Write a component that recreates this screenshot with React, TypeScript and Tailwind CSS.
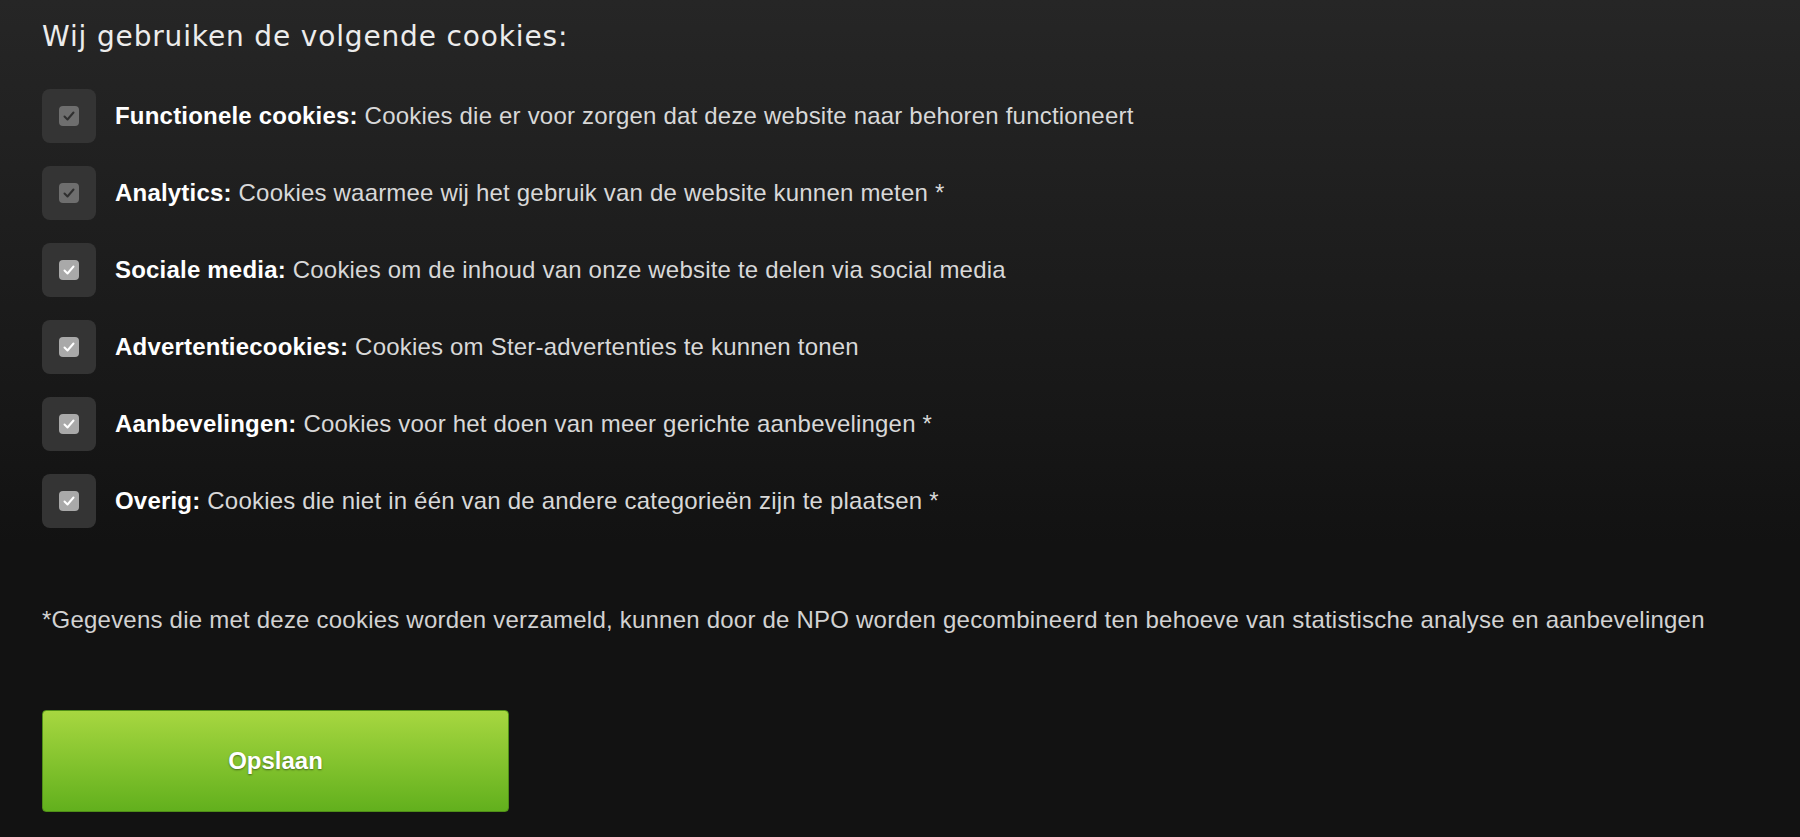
import { useState } from "react";

interface CookieOption {
  id: string;
  label: string;
  description: string;
  locked?: boolean;
}

const OPTIONS: CookieOption[] = [
  { id: "functional", label: "Functionele cookies:", description: "Cookies die er voor zorgen dat deze website naar behoren functioneert", locked: true },
  { id: "analytics", label: "Analytics:", description: "Cookies waarmee wij het gebruik van de website kunnen meten *", locked: true },
  { id: "social", label: "Sociale media:", description: "Cookies om de inhoud van onze website te delen via social media" },
  { id: "ads", label: "Advertentiecookies:", description: "Cookies om Ster-advertenties te kunnen tonen" },
  { id: "recommendations", label: "Aanbevelingen:", description: "Cookies voor het doen van meer gerichte aanbevelingen *" },
  { id: "other", label: "Overig:", description: "Cookies die niet in één van de andere categorieën zijn te plaatsen *" },
];

function CheckBox({ checked, locked, onToggle }: { checked: boolean; locked?: boolean; onToggle: () => void }) {
  return (
    <button
      type="button"
      onClick={() => !locked && onToggle()}
      className="flex h-[54px] w-[54px] shrink-0 items-center justify-center rounded-lg bg-[#343434]"
    >
      <span
        className={`flex h-[20px] w-[20px] items-center justify-center rounded-[4px] ${
          locked ? "bg-[#6e6e6e]" : "bg-[#a9a9a9]"
        }`}
      >
        {checked && (
          <svg width="14" height="14" viewBox="0 0 14 14" fill="none">
            <polyline
              points="2.5 7.5 5.5 10.5 11.5 3.5"
              stroke={locked ? "#2f2f2f" : "#ffffff"}
              strokeWidth="2"
              strokeLinecap="round"
              strokeLinejoin="round"
            />
          </svg>
        )}
      </span>
    </button>
  );
}

export default function App() {
  const [checked, setChecked] = useState<Record<string, boolean>>(
    Object.fromEntries(OPTIONS.map((o) => [o.id, true]))
  );

  return (
    <div className="min-h-screen bg-[linear-gradient(to_bottom,#262626_0%,#1a1a1a_40%,#121212_65%,#121212_100%)] font-['Liberation_Sans',Arial,sans-serif]">
      <div className="pl-[42px] pt-[21px] pb-[25px]">
        <h2 className="font-['DejaVu_Sans',sans-serif] text-[28px] leading-[32px] tracking-[0.85px] text-[#ececec]">
          Wij gebruiken de volgende cookies:
        </h2>

        <ul className="mt-[36px] flex flex-col gap-[23px]">
          {OPTIONS.map((option) => (
            <li key={option.id} className="flex items-center gap-[19px]">
              <CheckBox
                checked={checked[option.id]}
                locked={option.locked}
                onToggle={() => setChecked({ ...checked, [option.id]: !checked[option.id] })}
              />
              <p className="text-[24px] leading-[28px] tracking-[0.2px] text-[#d8d8d8]">
                <span className="font-bold text-white">{option.label}</span> {option.description}
              </p>
            </li>
          ))}
        </ul>

        <p className="mt-[78px] text-[24px] leading-[28px] tracking-[0.22px] text-[#d2d2d2]">
          *Gegevens die met deze cookies worden verzameld, kunnen door de NPO worden gecombineerd ten behoeve van statistische analyse en aanbevelingen
        </p>

        <button
          type="button"
          className="mt-[76px] flex h-[102px] w-[467px] items-center justify-center rounded-[4px] border border-[#4f8f17] bg-[linear-gradient(to_bottom,#a7d740,#62b01d)] text-[24px] font-bold text-white [text-shadow:0_1px_2px_rgba(0,0,0,0.45)]"
        >
          Opslaan
        </button>
      </div>
    </div>
  );
}
